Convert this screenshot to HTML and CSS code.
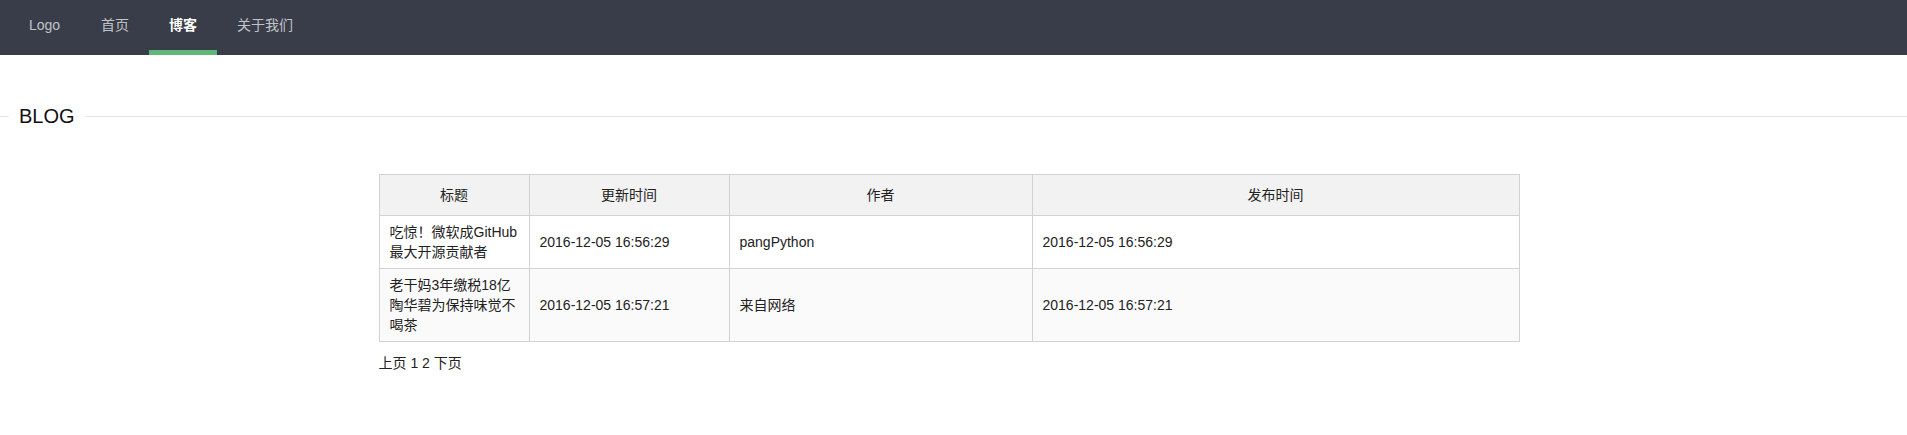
FILE: index.html
```html
<!DOCTYPE html>
<html lang="zh-CN">
<head>
<meta charset="utf-8">
<title>BLOG</title>
<link rel="stylesheet" href="styles.css">
</head>
<body>
<header class="topbar">
  <ul class="nav">
    <li class="nav-item nav-logo"><a href="#">Logo</a></li>
    <li class="nav-item"><a href="#">首页</a></li>
    <li class="nav-item is-active"><a href="#">博客</a></li>
    <li class="nav-item"><a href="#">关于我们</a></li>
  </ul>
</header>
<main>
  <div class="section-title"><span class="section-title-text">BLOG</span></div>
  <div class="container">
    <table class="blog-table">
      <colgroup>
        <col class="col-title">
        <col class="col-updated">
        <col class="col-author">
        <col class="col-published">
      </colgroup>
      <thead>
        <tr><th>标题</th><th>更新时间</th><th>作者</th><th>发布时间</th></tr>
      </thead>
      <tbody>
        <tr>
          <td>吃惊！微软成GitHub最大开源贡献者</td>
          <td>2016-12-05 16:56:29</td>
          <td>pangPython</td>
          <td>2016-12-05 16:56:29</td>
        </tr>
        <tr class="even">
          <td>老干妈3年缴税18亿 陶华碧为保持味觉不喝茶</td>
          <td>2016-12-05 16:57:21</td>
          <td>来自网络</td>
          <td>2016-12-05 16:57:21</td>
        </tr>
      </tbody>
    </table>
    <div class="pager"><a href="#">上页</a> <a href="#">1</a> <a href="#">2</a> <a href="#">下页</a></div>
  </div>
</main>
</body>
</html>
```
FILE: styles.css
```css
html, body {
  margin: 0;
  padding: 0;
  background: #fff;
}
body {
  font-family: "Liberation Sans", Arial, "Noto Sans CJK SC", sans-serif;
  font-size: 14px;
  color: #333;
}
a {
  color: inherit;
  text-decoration: none;
}

/* top navigation */
.topbar {
  background: #393d49;
  height: 55px;
}
.nav {
  list-style: none;
  margin: 0;
  padding: 0 0 0 9px;
  display: flex;
}
.nav-item a {
  display: block;
  padding: 0 20px;
  line-height: 50px;
  border-bottom: 5px solid transparent;
  color: rgba(255, 255, 255, 0.7);
}
.nav-logo a {
  min-width: 32px;
}
.nav-item.is-active a {
  color: #fff;
  font-weight: bold;
  border-bottom-color: #5fb878;
}

/* section title */
.section-title {
  display: flex;
  align-items: center;
  margin-top: 49px;
}
.section-title::before {
  content: "";
  width: 9px;
  border-top: 1px solid #e6e6e6;
}
.section-title::after {
  content: "";
  flex: 1;
  border-top: 1px solid #e6e6e6;
}
.section-title-text {
  padding: 0 10px;
  font-size: 20px;
  line-height: 24px;
  font-weight: 300;
  color: #111;
}

/* content */
.container {
  width: 1140px;
  margin-left: calc(50% - 575px);
  margin-top: 46px;
}
.blog-table {
  width: 1140px;
  border-collapse: collapse;
  table-layout: fixed;
  color: #222;
}
.col-title { width: 150px; }
.col-updated { width: 200px; }
.col-author { width: 303px; }
.col-published { width: 487px; }

.blog-table th,
.blog-table td {
  border: 1px solid #d2d2d2;
  line-height: 20px;
  padding: 6px 10px;
  text-align: left;
  word-break: break-all;
}
.blog-table th {
  background: #f2f2f2;
  font-weight: normal;
  text-align: center;
  padding: 10px 10px 10px;
  line-height: 20px;
}
.blog-table tr.even td {
  background: #fafafa;
}
.pager {
  margin-top: 11px;
  line-height: 20px;
  color: #222;
}
```
